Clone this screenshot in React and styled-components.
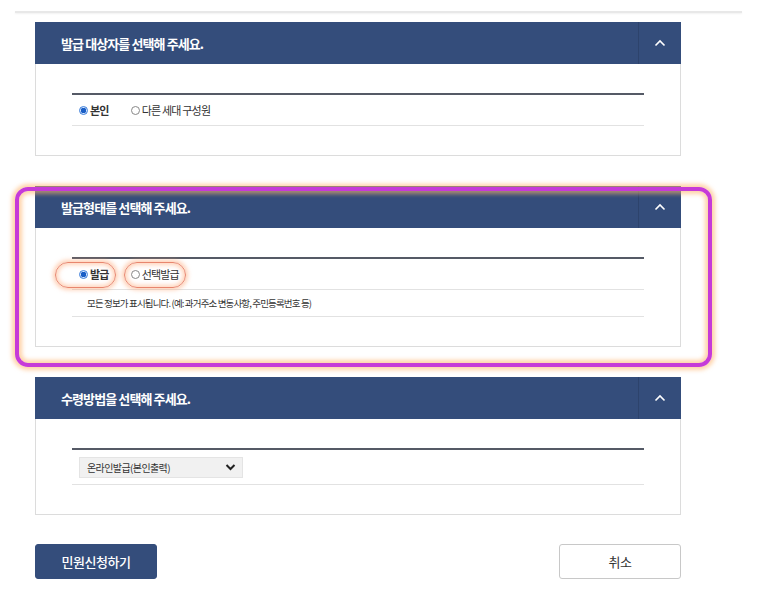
import styled, { createGlobalStyle } from 'styled-components';

const GlobalStyle = createGlobalStyle`
body{
    margin:0;
    background:#fff;
    font-family:"Noto Sans CJK KR", "Noto Sans", sans-serif;
    color:#333;
}
`;

const Page = styled.div`
position:relative;
width:758px;
height:610px;
padding-top:11px;
box-sizing:border-box;
`;

const TopRule = styled.div`
margin:0 16px 0 15px;
height:2px;
background:#e8e8e8;
box-shadow:0 1px 2px rgba(0,0,0,0.06);
`;

const Content = styled.div`
width:646px;
margin:9px 0 0 35px;
display:flex;
flex-direction:column;
gap:30px;
`;

const Panel = styled.section`
border:1px solid #dcdcdc;
border-top:none;
background:#fff;
`;

const PanelHead = styled.div`
height:42px;
background:#344d7b;
display:flex;
align-items:stretch;
margin:0 -1px;
& h2{
    flex:1;
    margin:0;
    padding-left:26px;
    display:flex;
    align-items:center;
    color:#fff;
    font-size:13px;
    font-weight:700;
    letter-spacing:-0.9px;
}
& button{
    width:43px;
    border:none;
    border-left:1px solid rgba(0,0,0,0.12);
    background:transparent;
    display:flex;
    align-items:center;
    justify-content:center;
    padding:0;
    cursor:pointer;
}
`;

const PanelBody = styled.div`
padding:29px 36px 29px 36px;
`;

const List = styled.div`
border-top:2px solid #555a66;
`;

const Row = styled.div`
display:flex;
align-items:center;
height:${p => p.h || 30}px;
border-bottom:1px solid #e2e2e2;
padding-left:${p => p.pl || 7}px;
gap:22px;
`;

const Radio = styled.label`
display:flex;
align-items:center;
gap:2px;
font-size:11px;
letter-spacing:-0.8px;
font-weight:${p => p.checked ? 700 : 400};
color:#333;
cursor:pointer;
& i{
    width:9px;
    height:9px;
    border-radius:50%;
    box-sizing:border-box;
    border:1px solid ${p => p.checked ? '#3d7fdc' : '#888'};
    background:${p => p.checked ? 'radial-gradient(circle, #1a5ec6 0 2.6px, #d6e5fa 3px)' : '#fff'};
}
`;

const Help = styled.div`
font-size:9.5px;
letter-spacing:-0.85px;
color:#333;
`;

const SelectBox = styled.div`
width:164px;
height:21px;
box-sizing:border-box;
background:#f1f1f1;
border:1px solid #e4e4e4;
display:flex;
align-items:center;
justify-content:space-between;
padding:0 6px 0 7px;
font-size:10px;
letter-spacing:-0.6px;
color:#333;
`;

const Actions = styled.div`
display:flex;
justify-content:space-between;
margin-top:-1px;
`;

const Button = styled.button`
width:122px;
height:35px;
box-sizing:border-box;
border-radius:3px;
font-family:inherit;
font-size:13px;
letter-spacing:-0.5px;
font-weight:${p => p.primary ? 500 : 400};
background:${p => p.primary ? '#344d7b' : '#fff'};
color:${p => p.primary ? '#fff' : '#333'};
border:1px solid ${p => p.primary ? '#344d7b' : '#c8c8c8'};
cursor:pointer;
`;

const Highlight = styled.div`
position:absolute;
left:15px;
top:187px;
width:697px;
height:180px;
box-sizing:border-box;
border:4px solid #c63ad8;
border-radius:13px;
box-shadow:0 0 4px 3px rgba(255,180,110,0.6), inset 0 0 4px 3px rgba(255,180,110,0.6);
pointer-events:none;
`;

const Pill = styled.div`
position:absolute;
left:${p => p.x}px;
top:262px;
width:${p => p.w}px;
height:26px;
box-sizing:border-box;
border:1.5px solid #e8866e;
border-radius:13px;
box-shadow:0 0 4px 2px rgba(255,170,120,0.55), inset 0 0 4px 2px rgba(255,170,120,0.5);
pointer-events:none;
`;

const ChevronUp = () => (
    <svg width="12" height="8" viewBox="0 0 12 8">
        <path d="M1.5 6.5 L6 2 L10.5 6.5" fill="none" stroke="#fff" strokeWidth="1.6" />
    </svg>
);

const ChevronDown = () => (
    <svg width="11" height="8" viewBox="0 0 11 8">
        <path d="M1.5 2 L5.5 6 L9.5 2" fill="none" stroke="#222" strokeWidth="2" />
    </svg>
);

const Section = ({ title, children }) => (
    <Panel>
        <PanelHead>
            <h2>{title}</h2>
            <button><ChevronUp /></button>
        </PanelHead>
        <PanelBody>
            <List>{children}</List>
        </PanelBody>
    </Panel>
);

const App = () => {
    return (
        <>
            <GlobalStyle />
            <Page>
                <TopRule />
                <Content>
                    <Section title="발급 대상자를 선택해 주세요.">
                        <Row>
                            <Radio checked><i />본인</Radio>
                            <Radio><i />다른 세대 구성원</Radio>
                        </Row>
                    </Section>
                    <Section title="발급형태를 선택해 주세요.">
                        <Row h={30}>
                            <Radio checked><i />발급</Radio>
                            <Radio><i />선택발급</Radio>
                        </Row>
                        <Row h={26} pl={15}>
                            <Help>모든 정보가 표시됩니다. (예: 과거주소 변동사항, 주민등록번호 등)</Help>
                        </Row>
                    </Section>
                    <Section title="수령방법을 선택해 주세요.">
                        <Row h={34}>
                            <SelectBox>
                                <span>온라인발급(본인출력)</span>
                                <ChevronDown />
                            </SelectBox>
                        </Row>
                    </Section>
                    <Actions>
                        <Button primary>민원신청하기</Button>
                        <Button>취소</Button>
                    </Actions>
                </Content>
                <Highlight />
                <Pill x={55} w={61} />
                <Pill x={124} w={62} />
            </Page>
        </>
    );
};

export default App;
